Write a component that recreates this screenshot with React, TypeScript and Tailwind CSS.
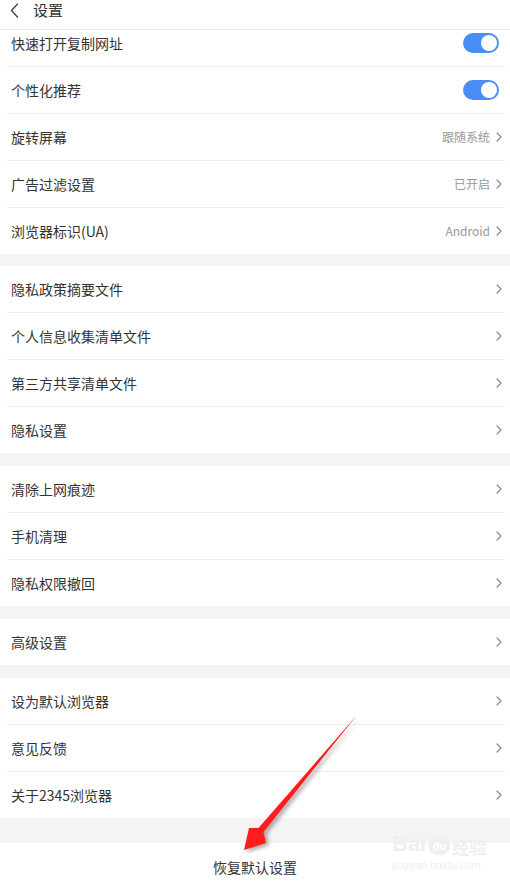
import React from "react";

type Row = { label: string; value?: string; toggle?: boolean };

const groups: Row[][] = [
  [
    { label: "快速打开复制网址", toggle: true },
    { label: "个性化推荐", toggle: true },
    { label: "旋转屏幕", value: "跟随系统" },
    { label: "广告过滤设置", value: "已开启" },
    { label: "浏览器标识(UA)", value: "Android" },
  ],
  [
    { label: "隐私政策摘要文件" },
    { label: "个人信息收集清单文件" },
    { label: "第三方共享清单文件" },
    { label: "隐私设置" },
  ],
  [{ label: "清除上网痕迹" }, { label: "手机清理" }, { label: "隐私权限撤回" }],
  [{ label: "高级设置" }],
  [{ label: "设为默认浏览器" }, { label: "意见反馈" }, { label: "关于2345浏览器" }],
];

const gapClasses = ["h-[12px]", "h-[13px]", "h-[13px]", "h-[13px]"];

function Chevron() {
  return (
    <svg width="6" height="10" viewBox="0 0 6 10" className="shrink-0">
      <path d="M1 1 L5 5 L1 9" fill="none" stroke="#8a8a8a" strokeWidth="1.2" strokeLinecap="round" strokeLinejoin="round" />
    </svg>
  );
}

function Toggle() {
  return (
    <div className="mr-[6px] w-[36px] h-[20px] rounded-full bg-[#4a8df6] flex items-center justify-end pr-[2px]">
      <div className="w-[16px] h-[16px] rounded-full bg-white" />
    </div>
  );
}

function SettingRow({ row, last }: { row: Row; last: boolean }) {
  return (
    <div className={`bg-white pl-[7px] pr-[5px] ${last ? "h-[46px]" : "h-[47px]"}`}>
      <div className={`h-full flex items-center justify-between pl-[4px] ${last ? "" : "border-b border-[#efefef]"}`}>
        <span className="text-[14px] leading-[20px] text-[#333333]">{row.label}</span>
        {row.toggle ? (
          <Toggle />
        ) : (
          <div className="flex items-center gap-[6px] pr-[3px]">
            {row.value && <span className="text-[12px] leading-[16px] text-[#999999]">{row.value}</span>}
            <Chevron />
          </div>
        )}
      </div>
    </div>
  );
}

export default function App() {
  return (
    <div
      className="relative w-[510px] h-[890px] bg-[#f4f4f4] overflow-hidden flex flex-col"
      style={{ fontFamily: '"Noto Sans CJK SC", "Noto Sans", sans-serif' }}
    >
      <div className="h-[30px] shrink-0 bg-white border-b border-[#e6e6e6] flex items-start pl-[10px] relative z-10">
        <div className="h-[20px] flex items-center">
          <svg width="9" height="15" viewBox="0 0 9 15">
            <path d="M7.5 1 L1.5 7.5 L7.5 14" fill="none" stroke="#444" strokeWidth="1.4" strokeLinecap="round" strokeLinejoin="round" />
          </svg>
        </div>
        <span className="ml-[14px] text-[15px] leading-[20px] text-[#333333]">设置</span>
      </div>
      <div className="flex-1 overflow-hidden flex flex-col">
        <div className="-mt-[10px] flex flex-col">
          {groups.map((g, gi) => (
            <React.Fragment key={gi}>
              {gi > 0 && <div className={gapClasses[gi - 1]} />}
              {g.map((r, ri) => (
                <SettingRow key={ri} row={r} last={ri === g.length - 1} />
              ))}
            </React.Fragment>
          ))}
        </div>
        <div className="mt-auto h-[47px] bg-white flex items-center justify-center">
          <span className="text-[14px] leading-[20px] text-[#333333]">恢复默认设置</span>
        </div>
      </div>

      {/* watermark */}
      <div className="absolute left-[392px] top-[833px] flex flex-col items-start pointer-events-none select-none">
        <div className="flex items-end leading-none">
          <span className="text-[22px] font-bold text-[#efefef]" style={{ fontFamily: '"Liberation Sans", sans-serif' }}>Bai</span>
          <span className="mx-[2px] w-[22px] h-[18px] rounded-full bg-[#efefef] text-white text-[11px] font-bold flex items-center justify-center" style={{ fontFamily: '"Liberation Sans", sans-serif' }}>du</span>
          <span className="text-[17px] font-bold text-[#efefef]">经验</span>
        </div>
        <span className="mt-[2px] text-[11px] text-[#efefef]" style={{ fontFamily: '"Liberation Sans", sans-serif' }}>jingyan.baidu.com</span>
      </div>

      {/* red arrow */}
      <svg className="absolute left-0 top-0 pointer-events-none" width="510" height="890" viewBox="0 0 510 890">
        <defs>
          <filter id="shadow" x="-20%" y="-20%" width="140%" height="140%">
            <feDropShadow dx="3" dy="2" stdDeviation="2" floodColor="#000" floodOpacity="0.35" />
          </filter>
        </defs>
        <polygon
          points="357,715 263.5,832 266,843 244,850 249,828 258.5,828"
          fill="#ff1a1a"
          filter="url(#shadow)"
        />
      </svg>
    </div>
  );
}
